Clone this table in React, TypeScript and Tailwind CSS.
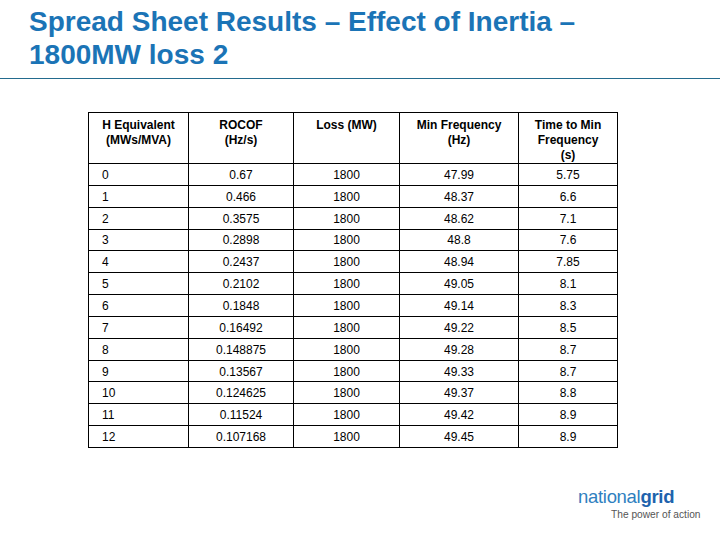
import React from "react";

const rows: string[][] = [
  ["0", "0.67", "1800", "47.99", "5.75"],
  ["1", "0.466", "1800", "48.37", "6.6"],
  ["2", "0.3575", "1800", "48.62", "7.1"],
  ["3", "0.2898", "1800", "48.8", "7.6"],
  ["4", "0.2437", "1800", "48.94", "7.85"],
  ["5", "0.2102", "1800", "49.05", "8.1"],
  ["6", "0.1848", "1800", "49.14", "8.3"],
  ["7", "0.16492", "1800", "49.22", "8.5"],
  ["8", "0.148875", "1800", "49.28", "8.7"],
  ["9", "0.13567", "1800", "49.33", "8.7"],
  ["10", "0.124625", "1800", "49.37", "8.8"],
  ["11", "0.11524", "1800", "49.42", "8.9"],
  ["12", "0.107168", "1800", "49.45", "8.9"],
];

const widths = ["w-[100px]", "w-[105px]", "w-[106px]", "w-[119px]", "w-[99px]"];

export default function App() {
  return (
    <div
      className="w-[720px] h-[540px] bg-white relative overflow-hidden"
      style={{ fontFamily: '"Liberation Sans", Arial, sans-serif' }}
    >
      <div className="pl-[29px] pt-[5px] h-[78px]">
        <h1 className="text-[28px] leading-[33px] font-bold text-[#1b74b6]">
          Spread Sheet Results – Effect of Inertia –<br />
          1800MW loss 2
        </h1>
      </div>
      <div className="h-px bg-[#236b8e] w-full" />
      <div className="pl-[88px] pt-[33px]">
        <table className="border-collapse text-black text-[12px]">
          <thead>
            <tr className="h-[50px]">
              {[
                ["H Equivalent", "(MWs/MVA)"],
                ["ROCOF", "(Hz/s)"],
                ["Loss (MW)"],
                ["Min Frequency", "(Hz)"],
                ["Time to Min", "Frequency", "(s)"],
              ].map((lines, i) => (
                <th
                  key={i}
                  className={`${widths[i]} border border-black align-top font-bold text-center leading-[15px] pt-[5px] p-0`}
                >
                  {lines.map((l, j) => (
                    <div key={j}>{l}</div>
                  ))}
                </th>
              ))}
            </tr>
          </thead>
          <tbody>
            {rows.map((r, i) => (
              <tr key={i} className="h-[21.85px]">
                {r.map((c, j) => (
                  <td
                    key={j}
                    className={`border border-black p-0 pt-[2px] ${j === 0 ? "text-left pl-[13px]" : "text-center"} leading-[13px]`}
                  >
                    {c}
                  </td>
                ))}
              </tr>
            ))}
          </tbody>
        </table>
      </div>
      <div className="absolute left-[578px] top-[486px]">
        <div className="text-[18.5px] leading-[21px] tracking-[-0.3px]">
          <span className="text-[#2f7fc0]">national</span>
          <span className="text-[#1e63ad] font-bold">grid</span>
        </div>
        <div className="text-[10.2px] leading-[12px] text-[#555] pl-[33px] mt-[2px] whitespace-nowrap">
          The power of action
        </div>
      </div>
    </div>
  );
}
